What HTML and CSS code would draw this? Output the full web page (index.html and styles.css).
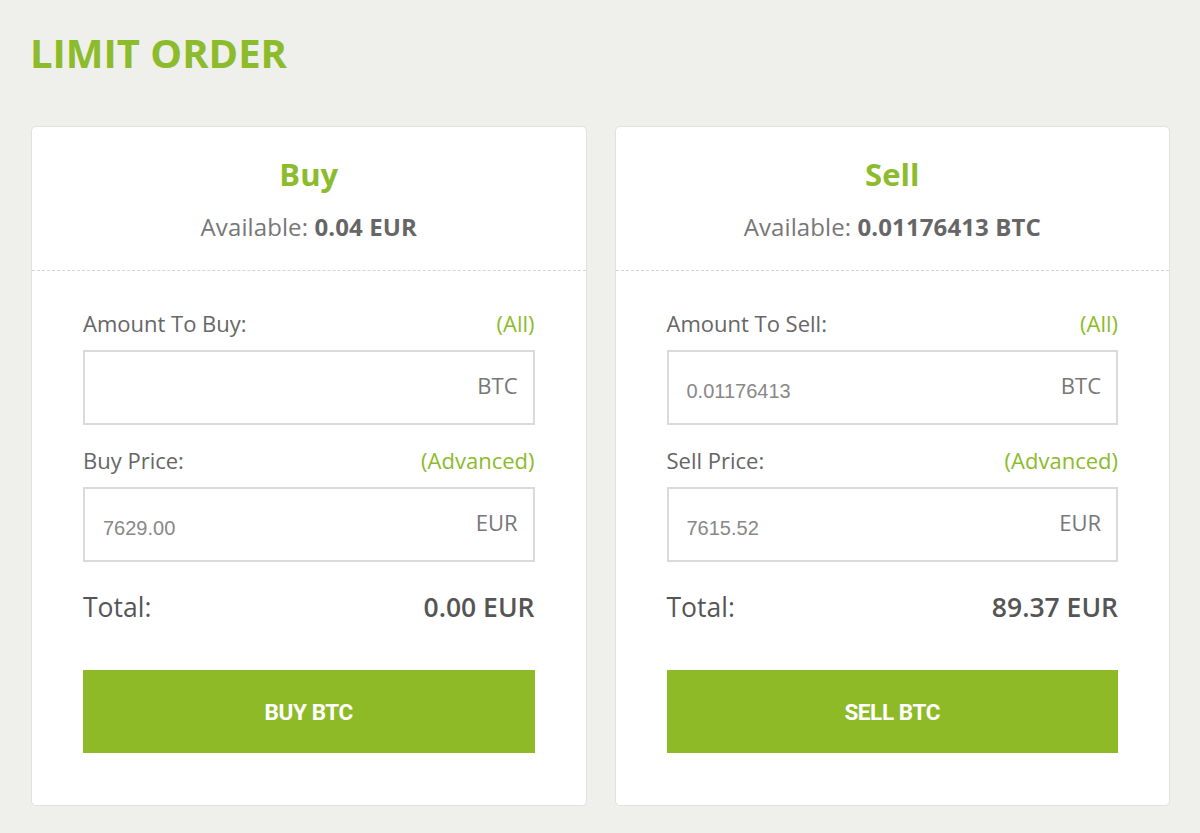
FILE: index.html
```html
<!DOCTYPE html>
<html lang="en">
<head>
    <meta charset="UTF-8">
    <meta name="viewport" content="width=device-width, initial-scale=1.0">
    <title>Limit Order</title>
    <link rel="stylesheet" href="styles.css">
</head>
<body>
    <h1 class="page-title">LIMIT ORDER</h1>

    <div class="orders">
        <div class="order-card">
            <div class="card-head">
                <h2>Buy</h2>
                <p class="available">Available: <b>0.04 EUR</b></p>
            </div>
            <div class="card-body">
                <div class="field-label">
                    <span>Amount To Buy:</span>
                    <a class="link">(All)</a>
                </div>
                <div class="field">
                    <input type="text" value="">
                    <span class="unit">BTC</span>
                </div>

                <div class="field-label">
                    <span>Buy Price:</span>
                    <a class="link">(Advanced)</a>
                </div>
                <div class="field">
                    <input type="text" value="7629.00">
                    <span class="unit">EUR</span>
                </div>

                <div class="total">
                    <span>Total:</span>
                    <strong>0.00 EUR</strong>
                </div>

                <button class="submit">BUY BTC</button>
            </div>
        </div>

        <div class="order-card">
            <div class="card-head">
                <h2>Sell</h2>
                <p class="available">Available: <b>0.01176413 BTC</b></p>
            </div>
            <div class="card-body">
                <div class="field-label">
                    <span>Amount To Sell:</span>
                    <a class="link">(All)</a>
                </div>
                <div class="field">
                    <input type="text" value="0.01176413">
                    <span class="unit">BTC</span>
                </div>

                <div class="field-label">
                    <span>Sell Price:</span>
                    <a class="link">(Advanced)</a>
                </div>
                <div class="field">
                    <input type="text" value="7615.52">
                    <span class="unit">EUR</span>
                </div>

                <div class="total">
                    <span>Total:</span>
                    <strong>89.37 EUR</strong>
                </div>

                <button class="submit">SELL BTC</button>
            </div>
        </div>
    </div>
</body>
</html>
```

FILE: styles.css
```css
body {
    margin: 0;
    padding: 29px 30px 0 31px;
    background: #efefeb;
    font-family: "Open Sans", Arial, sans-serif;
    color: #666;
}

.page-title {
    margin: 0 0 49px -1px;
    font-size: 40px;
    line-height: 48px;
    font-weight: 700;
    color: #8cbb2b;
}

.orders {
    display: grid;
    grid-template-columns: 1fr 1fr;
    gap: 28px;
}

.order-card {
    background: #fff;
    border: 1px solid #e1e1de;
    border-radius: 5px;
}

.card-head {
    padding: 29px 20px 28px;
    text-align: center;
    border-bottom: 1px dashed #d5d5d5;
}

.card-head h2 {
    margin: 0 0 19px;
    font-size: 31px;
    line-height: 37px;
    font-weight: 700;
    color: #8cbb2b;
}

.available {
    margin: 0;
    font-size: 24px;
    line-height: 30px;
    letter-spacing: 0.1px;
    color: #777;
}

.available b {
    font-weight: 700;
    color: #666;
}

.card-body {
    padding: 38px 51px 52px;
}

.field-label {
    display: flex;
    justify-content: space-between;
    font-size: 22px;
    line-height: 28px;
    margin-bottom: 13px;
}

.link {
    color: #8cbb2b;
}

.field {
    display: flex;
    align-items: center;
    height: 75px;
    box-sizing: border-box;
    border: 2px solid #dadada;
    padding: 0 15px 0 18px;
    margin-bottom: 21px;
}

.field input {
    flex: 1;
    min-width: 0;
    border: none;
    outline: none;
    padding: 8px 0 0;
    font-family: "Liberation Sans", Arial, sans-serif;
    font-size: 20px;
    color: #888;
    background: transparent;
}

.unit {
    font-size: 22px;
    color: #777;
    padding-bottom: 6px;
}

.total {
    display: flex;
    justify-content: space-between;
    font-size: 26.5px;
    line-height: 32px;
    margin-top: 29px;
    color: #555;
}

.total strong {
    font-weight: 600;
}

.submit {
    display: block;
    width: 100%;
    height: 83px;
    margin-top: 47px;
    border: none;
    background: #8fba28;
    color: #fff;
    font-family: Roboto, Arial, sans-serif;
    font-size: 22.5px;
    font-weight: 700;
    letter-spacing: -0.4px;
}
```
